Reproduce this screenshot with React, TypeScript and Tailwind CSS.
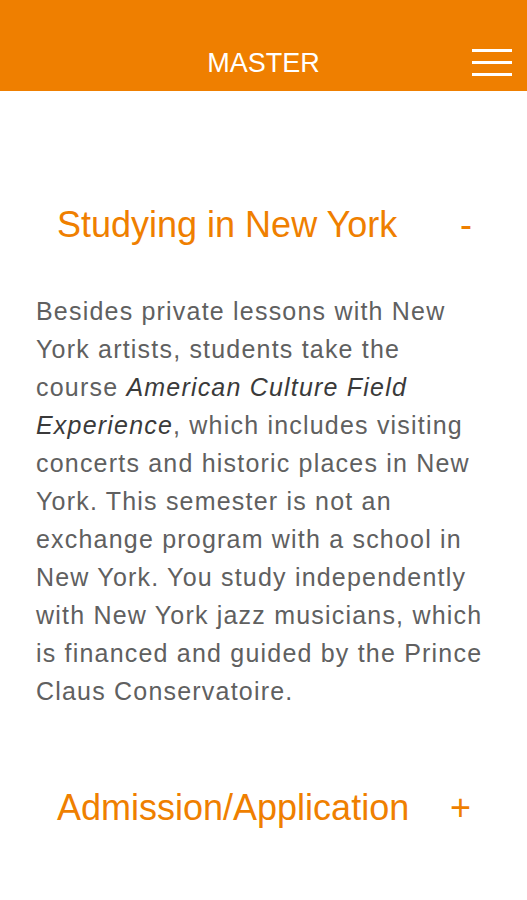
export default function App() {
  return (
    <div className="min-h-[900px] w-[527px] bg-white font-['Liberation_Sans',Arial,sans-serif]">
      <header className="flex h-[91px] items-end bg-[#ef7f00] pb-[14px]">
        <div className="w-[70px]" />
        <h1 className="flex-1 text-center text-[27px] leading-none text-white">MASTER</h1>
        <button className="flex w-[70px] flex-col items-center gap-[9px] pb-[1px]">
          <span className="block h-[3px] w-[40px] bg-white" />
          <span className="block h-[3px] w-[40px] bg-white" />
          <span className="block h-[3px] w-[40px] bg-white" />
        </button>
      </header>

      <main className="px-[36px]">
        <div className="mt-[114px] flex items-center justify-between pl-[21px] pr-[19px]">
          <h2 className="text-[36px] leading-[40px] text-[#ef7f00]">Studying in New York</h2>
          <span className="text-[36px] leading-[40px] text-[#ef7f00]">-</span>
        </div>

        <p className="mt-[47px] w-[480px] whitespace-nowrap text-[25px] leading-[38px] tracking-[1.2px] text-[#606060]">
          Besides private lessons with New
          <br />
          York artists, students take the
          <br />
          course <em className="text-[#3a3a3a]">American Culture Field</em>
          <br />
          <em className="text-[#3a3a3a]">Experience</em>, which includes visiting
          <br />
          concerts and historic places in New
          <br />
          York. This semester is not an
          <br />
          exchange program with a school in
          <br />
          New York. You study independently
          <br />
          with New York jazz musicians, which
          <br />
          is financed and guided by the Prince
          <br />
          Claus Conservatoire.
        </p>

        <div className="mt-[78px] flex items-center justify-between pl-[21px] pr-[20px]">
          <h2 className="text-[36px] leading-[40px] text-[#ef7f00]">Admission/Application</h2>
          <span className="text-[36px] leading-[40px] text-[#ef7f00]">+</span>
        </div>
      </main>
    </div>
  );
}
